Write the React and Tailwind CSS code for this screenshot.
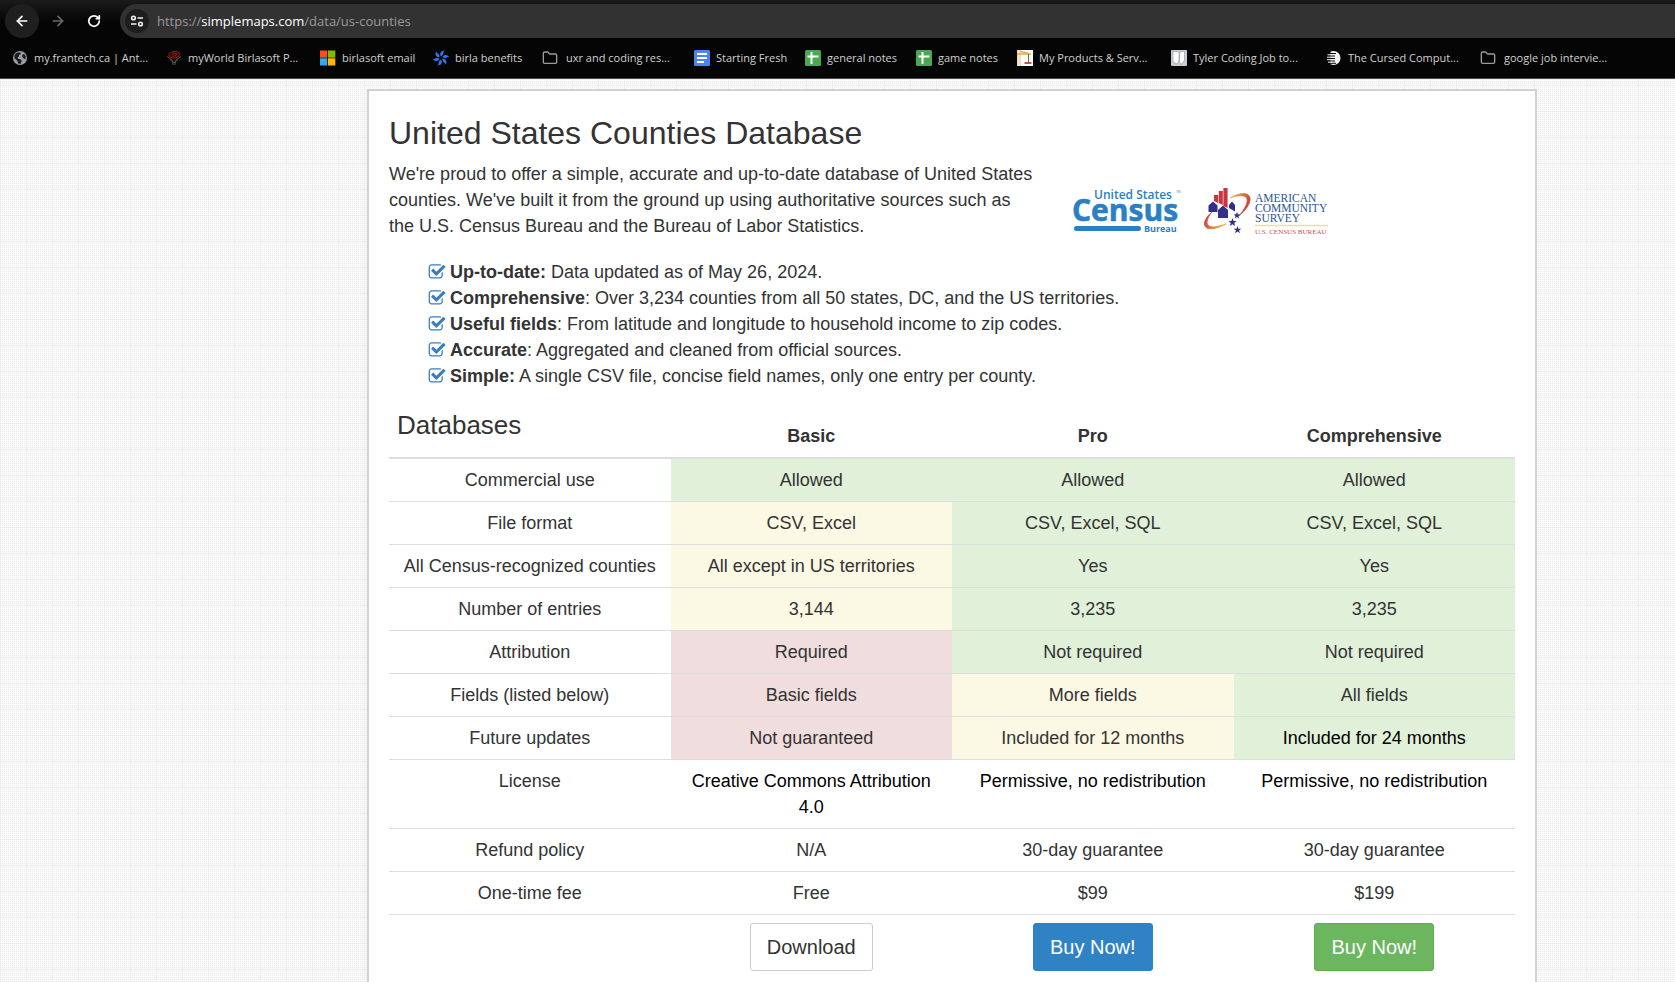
import React from "react";
import { ArrowLeft, ArrowRight, RotateCw, Folder } from "lucide-react";

const CHECK =
  "M1472 930v318q0 119-84.5 203.5t-203.5 84.5h-832q-119 0-203.5-84.5t-84.5-203.5v-832q0-119 84.5-203.5t203.5-84.5h832q63 0 117 25 15 7 18 23 3 17-9 29l-49 49q-10 10-23 10-3 0-9-2-23-6-45-6h-832q-66 0-113 47t-47 113v832q0 66 47 113t113 47h832q66 0 113-47t47-113v-254q0-13 9-22l64-64q10-10 23-10 6 0 12 3 20 8 20 29zm231-489l-814 814q-24 24-57 24t-57-24l-430-430q-24-24-24-57t24-57l110-110q24-24 57-24t57 24l263 263 647-647q24-24 57-24t57 24l110 110q24 24 24 57t-24 57z";

const Svg = ({ children }) => (
  <svg viewBox="0 0 16 16" className="size-4 shrink-0" aria-hidden="true">
    {children}
  </svg>
);

const GlobeIcon = () => (
  <Svg>
    <circle cx="8" cy="8" r="7" fill="#9aa0a6" />
    <path d="M2.500 5.500C3.500 3.500 5.500 2.300 8 2.300L9 4 7 5v1.500L5.500 7.500l.8 1.500 2.400.3 1 1.700-1.200 3-2.500-.5-.5-2.500L2.500 8.200zM10.500 4.500l1.800-.6 1.500 2.600-.3 2.700-2-.7-1.500-2.200z" fill="#1c1c1c" />
  </Svg>
);

const RoseIcon = () => (
  <Svg>
    <path d="M2.500 5 5.500 2l5-.8L14 3.500 12 7 8.500 8.200 4.500 7.500zM5.500 5 8 3.200l3 .8-2 2.200-2.500-.2" fill="#2a0505" stroke="#b01616" strokeWidth="1" />
    <path d="M1.200 6.500 6.700 10.500 7 15M15 6.500 9.500 10.500 9 15M4 9.500l4 3.500M12 9.500 8 13" fill="none" stroke="#55585c" strokeWidth="1" />
  </Svg>
);

const WindowsIcon = () => (
  <Svg>
    <path d="M0 .5h7.300v7.200H0z" fill="#f25022" />
    <path d="M8 .5h7.300v7.200H8z" fill="#7fba00" />
    <path d="M0 8.300h7.300v7.200H0z" fill="#3ca5f0" />
    <path d="M8 8.300h7.300v7.200H8z" fill="#ffb900" />
  </Svg>
);

const SwirlIcon = () => (
  <Svg>
    {[0, 60, 120, 180, 240, 300].map((a) => (
      <path key={a} d="M8 6.300C6 4 7.500.8 11.500.4c-1.500 1.300-.8 2.400-1.300 3.700C9.800 5.200 9 5.800 8 6.300z" fill="#2f76e6" transform={`rotate(${a} 8 8)`} />
    ))}
  </Svg>
);

const FolderIcon = () => <Folder className="mr-0.5 size-4 shrink-0 text-[#9a9a9a]" strokeWidth={2} aria-hidden="true" />;

const DocIcon = () => (
  <Svg>
    <rect width="16" height="16" rx="1.500" fill="#4a84f5" />
    <path d="M3 4h10M3 8h10M3 12h7" stroke="#fff" strokeWidth="1.800" />
  </Svg>
);

const SheetIcon = () => (
  <Svg>
    <rect width="16" height="16" rx="1.500" fill="#4ba852" />
    <path d="M2.500 6.500h11M6.500 2v12" stroke="#fff" strokeWidth="2" />
  </Svg>
);

const CraneIcon = () => (
  <Svg>
    <rect width="16" height="16" fill="#fdfbf6" />
    <path d="M.8 0v16M3 0v16" stroke="#ecd2a0" strokeWidth="1.400" />
    <path d="M0 4h14M3 1.500l9 2" stroke="#e0b055" strokeWidth="1.300" />
    <path d="M11.500 4v8" stroke="#6d6a60" strokeWidth="1" />
    <path d="M7.500 13h7" stroke="#c0432f" strokeWidth="1.800" />
  </Svg>
);

const PaperIcon = () => (
  <Svg>
    <rect width="16" height="16" rx="1" fill="#c9ccd0" />
    <path d="M2 1.500h5l1 1.500v8l-2 3-4-2zM9 1.500h4.500v9L10 14.500 8.500 12z" fill="#fff" stroke="#8f9296" strokeWidth=".6" />
  </Svg>
);

const StripedIcon = () => (
  <Svg>
    <path d="M7.500 1a7 7 0 0 1 0 14c-1 0-2-.2-3-.8V1.800c1-.6 2-.8 3-.8z" fill="#f4f4f4" />
    <path d="M2 3.500h8M1 6h8M1 8.500h8M1 11h8M2 13.300h8" stroke="#050505" strokeWidth="1" />
    <path d="M1.500 4.800h4M1 7.200h4M1 9.700h4M2 12.200h4" stroke="#f4f4f4" strokeWidth="1" />
  </Svg>
);

const bookmarks = [
  ["my.frantech.ca | Ant...", GlobeIcon, "w-[154px]"],
  ["myWorld Birlasoft P...", RoseIcon, "w-[154px]"],
  ["birlasoft email", WindowsIcon, "w-[113px]"],
  ["birla benefits", SwirlIcon, "w-[109px]"],
  ["uxr and coding res...", FolderIcon, "w-[152px]"],
  ["Starting Fresh", DocIcon, "w-[111px]"],
  ["general notes", SheetIcon, "w-[111px]"],
  ["game notes", SheetIcon, "w-[101px]"],
  ["My Products & Serv...", CraneIcon, "w-[154px]"],
  ["Tyler Coding Job to...", PaperIcon, "w-[155px]"],
  ["The Cursed Comput...", StripedIcon, "w-[154px]"],
  ["google job intervie...", FolderIcon, "w-[154px]"],
];

function BrowserBar() {
  return (
    <header className="border-b border-[#4a4a4a] bg-[#050505] font-['Open_Sans','Noto_Sans',sans-serif]">
      <div className="flex h-[38px] items-center bg-linear-to-b from-[#1b1b1b] to-[#050505] to-60% pt-1 pl-[5px]">
        <button aria-label="Back" className="flex size-[34px] items-center justify-center rounded-full bg-[#1f1f1f] text-white">
          <ArrowLeft className="size-4" strokeWidth={2.5} />
        </button>
        <button aria-label="Forward" className="ml-0.5 flex size-[34px] items-center justify-center text-[#6a6a6a]">
          <ArrowRight className="size-4" strokeWidth={2.5} />
        </button>
        <button aria-label="Reload" className="ml-0.5 flex size-[34px] items-center justify-center text-white">
          <RotateCw className="size-3.5" strokeWidth={3} />
        </button>
        <div className="ml-[9px] flex h-[34px] flex-1 items-center rounded-l-full bg-[#323232] pl-[5px]">
          <button aria-label="Site information" className="flex size-6 items-center justify-center rounded-full bg-[#1e1e1e]">
            <svg viewBox="0 0 14 14" className="size-3.5" fill="none" stroke="#f1f1f1" strokeWidth="1.600">
              <circle cx="3.500" cy="4" r="1.800" />
              <path d="M7.500 4H13M1 10h5.500" />
              <circle cx="10.500" cy="10" r="1.800" />
            </svg>
          </button>
          <p className="ml-2 text-[13px] leading-5 text-[#9b9b9b]">
            https://<span className="text-white">simplemaps.com</span>/data/us-counties
          </p>
        </div>
      </div>
      <nav aria-label="Bookmarks" className="flex h-10 items-center overflow-hidden pl-3">
        {bookmarks.map(([label, Icon, width]) => (
          <a key={label} href="#" className={`flex shrink-0 items-center gap-1.5 text-[11px] leading-4 whitespace-nowrap text-[#d0d0d0] ${width}`}>
            <Icon />
            {label}
          </a>
        ))}
      </nav>
    </header>
  );
}

function CensusLogo() {
  return (
    <svg viewBox="0 0 110 48" className="h-12 w-[110px]" role="img" aria-label="United States Census Bureau">
      <g fill="#2a7fc5" fontFamily="'Open Sans', sans-serif">
        <text x="21" y="13" fontSize="12" fontWeight="600">United States</text>
        <text x="103" y="7" fontSize="3">TM</text>
        <text x="-1" y="35" fontSize="30" fontWeight="700" stroke="#2a7fc5" strokeWidth=".6">Census</text>
        <text x="71" y="46" fontSize="9" fontWeight="700">Bureau</text>
        <rect x="1" y="40" width="67" height="5" rx="2.500" />
      </g>
    </svg>
  );
}

const STAR = "M0-4 1-1.300 3.800-1.200 1.600.5 2.400 3.200 0 1.600-2.400 3.200-1.600.5-3.800-1.200-1-1.300z";

function SurveyLogo() {
  return (
    <svg viewBox="0 0 130 50" className="h-[50px] w-[130px]" role="img" aria-label="American Community Survey, U.S. Census Bureau">
      <defs>
        <linearGradient id="ringRight" x1="0" y1="0" x2="1" y2="0.6">
          <stop offset="0" stopColor="#f4c45a" />
          <stop offset="1" stopColor="#c2303a" />
        </linearGradient>
        <linearGradient id="ringLeft" x1="0" y1="0" x2="1" y2="0.4">
          <stop offset="0" stopColor="#c2303a" />
          <stop offset="1" stopColor="#f0a940" />
        </linearGradient>
      </defs>
      <path d="M9 26C1 32-1 41 5 42.500c5 1 12-1 18-4.500C16 40.500 9 42 6 40 2.500 38 4 32 9 26z" fill="url(#ringLeft)" stroke="url(#ringLeft)" strokeWidth=".8" />
      <path d="M27 12c9-5.500 19-6.500 20 0 .7 5-4 12-11 18 5-6.500 9-12.500 8-17-1.200-4.500-9-4-17-1z" fill="url(#ringRight)" stroke="url(#ringRight)" strokeWidth=".8" />
      <path d="M11 9h4.200v8l-4.200-2zM15.800 5h4v14l-4-2zM20.400 2h4.200v20L20.400 20z" fill="#c8343f" />
      <path d="M5.500 19.500l4.500-4 4.500 4V26h-9zM15 24l5-4.500 5 4.500v8H15zM26 19l3-3.500 3 3.500v6.500L26 22z" fill="#33308a" />
      <path d={STAR} fill="#33308a" transform="translate(34 29.500) scale(.9)" />
      <path d={STAR} fill="#33308a" transform="translate(29.500 36.500) scale(1.100)" />
      <path d={STAR} fill="#33308a" transform="translate(34.500 44) scale(1)" />
      <g fill="#2c5590" fontFamily="'Liberation Serif', serif" fontSize="11.500">
        <text x="52" y="16">AMERICAN</text>
        <text x="52" y="26">COMMUNITY</text>
        <text x="52" y="36">SURVEY</text>
      </g>
      <path d="M52 39.500h73" stroke="#f3dba0" strokeWidth="1.500" />
      <text x="52" y="47.500" fontSize="7" fill="#c4505a" fontFamily="'Liberation Serif', serif">U.S. CENSUS BUREAU</text>
    </svg>
  );
}

const features = [
  ["Up-to-date:", " Data updated as of May 26, 2024."],
  ["Comprehensive", ": Over 3,234 counties from all 50 states, DC, and the US territories."],
  ["Useful fields", ": From latitude and longitude to household income to zip codes."],
  ["Accurate", ": Aggregated and cleaned from official sources."],
  ["Simple:", " A single CSV file, concise field names, only one entry per county."],
];

const G = "bg-[#e0f0d9]";
const Y = "bg-[#fbf8e3]";
const R = "bg-[#f0dddd]";
const B = "text-black";

const rows = [
  ["Commercial use", ["Allowed", G], ["Allowed", G], ["Allowed", G]],
  ["File format", ["CSV, Excel", Y], ["CSV, Excel, SQL", G], ["CSV, Excel, SQL", G]],
  ["All Census-recognized counties", ["All except in US territories", Y], ["Yes", G], ["Yes", G]],
  ["Number of entries", ["3,144", Y], ["3,235", G], ["3,235", G]],
  ["Attribution", ["Required", R], ["Not required", G], ["Not required", G]],
  ["Fields (listed below)", ["Basic fields", R], ["More fields", Y], ["All fields", G]],
  ["Future updates", ["Not guaranteed", R], ["Included for 12 months", Y], ["Included for 24 months", `${G} ${B}`]],
  ["License", ["Creative Commons Attribution 4.0", B], ["Permissive, no redistribution", B], ["Permissive, no redistribution", B]],
  ["Refund policy", ["N/A", ""], ["30-day guarantee", ""], ["30-day guarantee", ""]],
  ["One-time fee", ["Free", ""], ["$99", ""], ["$199", ""]],
];

const BUTTON = "h-12 rounded-[3px] border px-4 text-[20px] leading-7";

export default function App() {
  return (
    <div className="flex min-h-screen flex-col bg-[#fafafa]">
      <BrowserBar />
      <div className="flex flex-1 flex-col bg-[#fafafa] bg-[linear-gradient(90deg,#ececec_1px,transparent_1px),linear-gradient(#ececec_1px,transparent_1px),conic-gradient(from_270deg_at_1px_1px,#ececec_90deg,transparent_90deg)] bg-size-[26px_26px,26px_26px,2px_2px] bg-position-[0_0,0_6px,0_0] pt-2.5 pr-[138px] pl-[367px]">
        <main className="flex-1 border-2 border-b-0 border-[#d0d0d0] bg-white px-5 pt-6 font-['Liberation_Sans',Arial,sans-serif] text-[18px] leading-[26px] text-[#333]">
          <div className="flex items-start">
            <div className="w-[648px]">
              <h1 className="text-[32px] leading-9">United States Counties Database</h1>
              <p className="mt-2.5">
                We're proud to offer a simple, accurate and up-to-date database of United States counties. We've built it from the ground up using authoritative sources such as the U.S. Census Bureau and the Bureau of Labor Statistics.
              </p>
            </div>
            <div className="flex items-start gap-5 pt-[71px] pl-9">
              <CensusLogo />
              <SurveyLogo />
            </div>
          </div>
          <ul className="mt-5 pl-[39px]">
            {features.map(([name, text]) => (
              <li key={name} className="flex items-center gap-1">
                <svg viewBox="0 0 1792 1792" className="size-[18px] shrink-0" fill="#3a7dc0" aria-hidden="true">
                  <path d={CHECK} />
                </svg>
                <span>
                  <b>{name}</b>
                  {text}
                </span>
              </li>
            ))}
          </ul>
          <table className="mt-3 w-full table-fixed border-collapse text-center">
            <thead>
              <tr className="border-b-2 border-[#ddd]">
                <th scope="col" className="px-2 pt-2 pb-4 text-left align-top text-[26px] leading-8 font-normal">Databases</th>
                {["Basic", "Pro", "Comprehensive"].map((name) => (
                  <th key={name} scope="col" className="p-2 align-bottom font-bold">{name}</th>
                ))}
              </tr>
            </thead>
            <tbody>
              {rows.map(([name, ...cells]) => (
                <tr key={name} className="border-b border-[#ddd]">
                  <th scope="row" className="p-2 align-top font-normal">{name}</th>
                  {cells.map(([text, tone], i) => (
                    <td key={i} className={`p-2 align-top ${tone}`}>{text}</td>
                  ))}
                </tr>
              ))}
              <tr>
                <td />
                <td className="py-2">
                  <button className={`${BUTTON} border-[#ccc] bg-white text-[#333]`}>Download</button>
                </td>
                <td className="py-2">
                  <button className={`${BUTTON} border-[#2f82c4] bg-[#2f82c4] text-white`}>Buy Now!</button>
                </td>
                <td className="py-2">
                  <button className={`${BUTTON} border-[#5cb04c] bg-[#6bb65f] text-white`}>Buy Now!</button>
                </td>
              </tr>
            </tbody>
          </table>
        </main>
      </div>
    </div>
  );
}
